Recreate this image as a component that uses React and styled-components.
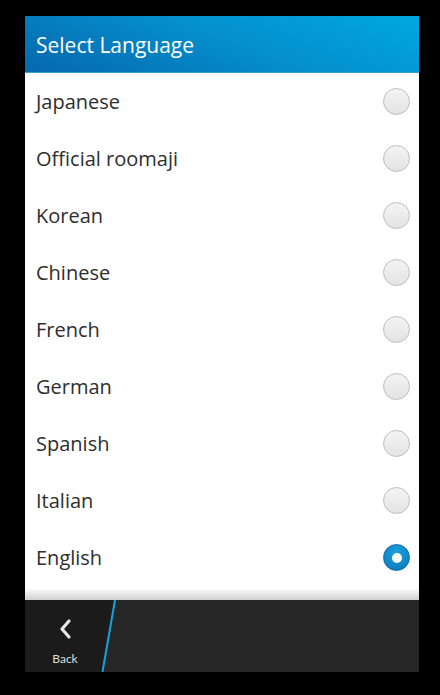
import React from "react";
import styled, { createGlobalStyle } from "styled-components";

const Global = createGlobalStyle`
  html, body { margin: 0; padding: 0; background: #000; }
  body { width: 440px; height: 695px; overflow: hidden; }
`;

const Page = styled.div`
  width: 440px;
  height: 695px;
  background: #000;
  padding: 16px 21px 23px 25px;
  box-sizing: border-box;
`;

const Screen = styled.div`
  width: 394px;
  height: 656px;
  display: flex;
  flex-direction: column;
  font-family: "Open Sans", "Liberation Sans", sans-serif;
`;

const Header = styled.div`
  height: 57px;
  flex: none;
  display: flex;
  align-items: center;
  padding-left: 11px;
  padding-top: 2px;
  box-sizing: border-box;
  color: #fff;
  font-size: 21px;
  background: linear-gradient(200deg, #00a8e0 0%, #0490cf 45%, #0668ad 100%);
  border-bottom: 1px solid #3a9cc8;
`;

const List = styled.div`
  flex: 1;
  background: #fff;
  display: flex;
  flex-direction: column;
  position: relative;
  &::after {
    content: "";
    position: absolute;
    left: 0; right: 0; bottom: 0;
    height: 12px;
    background: linear-gradient(#ffffff, #cfcfcf);
  }
`;

const Row = styled.div`
  height: 57px;
  display: flex;
  align-items: center;
  justify-content: space-between;
  padding: 0 9px 0 11px;
  color: #2e2e2e;
  font-size: 20px;
`;

const Radio = styled.div`
  width: 27px;
  height: 27px;
  border-radius: 50%;
  box-sizing: border-box;
  display: flex;
  align-items: center;
  justify-content: center;
  ${(p) =>
    p.$checked
      ? `background: radial-gradient(circle at 50% 30%, #1aa0dc, #0a77b8);
         border: 1px solid #0a6aa8;`
      : `background: linear-gradient(#f4f4f4, #e3e3e3);
         border: 1px solid #bdbdbd;`}
`;

const Dot = styled.div`
  width: 10px;
  height: 10px;
  border-radius: 50%;
  background: #fff;
`;

const ActionBar = styled.div`
  height: 72px;
  flex: none;
  background: #262626;
  display: flex;
  position: relative;
`;

const BackButton = styled.div`
  width: 77px;
  display: flex;
  flex-direction: column;
  align-items: center;
  justify-content: center;
  gap: 11px;
  background: #1b1b1b;
  color: #ddd;
  font-size: 12px;
  font-family: "Lato", "Open Sans", sans-serif;
  padding: 11px 0 0 3px;
  box-sizing: border-box;
`;

const Slash = styled.svg`
  position: absolute;
  left: 76px;
  top: 0;
`;

const languages = [
  "Japanese",
  "Official roomaji",
  "Korean",
  "Chinese",
  "French",
  "German",
  "Spanish",
  "Italian",
  "English",
];

export default function App() {
  return (
    <Page>
      <Global />
      <Screen>
        <Header>Select Language</Header>
        <List>
          {languages.map((l) => (
            <Row key={l}>
              <span>{l}</span>
              <Radio $checked={l === "English"}>{l === "English" && <Dot />}</Radio>
            </Row>
          ))}
        </List>
        <ActionBar>
          <BackButton>
            <svg width="14" height="22" viewBox="0 0 14 22">
              <path d="M11 3 L4 11 L11 19" fill="none" stroke="#e6e6e6" strokeWidth="3.2" strokeLinecap="round" strokeLinejoin="round" />
            </svg>
            <span>Back</span>
          </BackButton>
          <Slash width="16" height="72" viewBox="0 0 16 72">
            <polygon points="0,0 14,0 1,72 0,72" fill="#1b1b1b" />
            <line x1="14" y1="0" x2="1.5" y2="72" stroke="#12a4dd" strokeWidth="2" />
          </Slash>
        </ActionBar>
      </Screen>
    </Page>
  );
}
